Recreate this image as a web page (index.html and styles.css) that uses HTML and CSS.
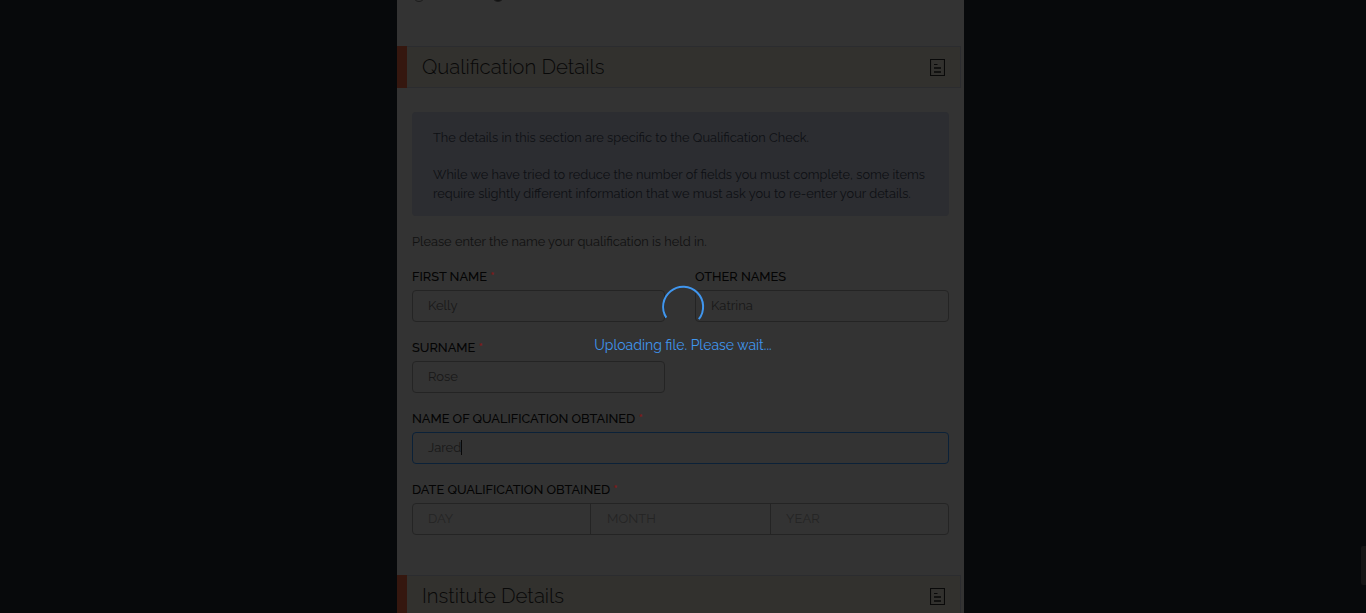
FILE: index.html
```html
<!DOCTYPE html>
<html lang="en">
<head>
<meta charset="utf-8">
<title>Qualification Details</title>
<link rel="stylesheet" href="styles.css">
</head>
<body>
<main class="sheet">
  <div class="options"><i class="radio"></i><i class="radio radio-on"></i></div>
  <header class="section-head">
    <h2>Qualification Details</h2>
    <svg class="doc" viewBox="0 0 15 17"><path d="M.5 .5H14.5V16.5H.5Z M4 5.5H7.5"/><path class="lines" d="M4 9H11 M4 13H11"/></svg>
  </header>
  <section class="body">
    <div class="notice">
      <p>The details in this section are specific to the Qualification Check.</p>
      <p>While we have tried to reduce the number of fields you must complete, some items<br>require slightly different information that we must ask you to re-enter your details.</p>
    </div>
    <p class="intro">Please enter the name your qualification is held in.</p>
    <div class="row">
      <div class="field"><label>FIRST NAME <b>*</b></label><div class="input">Kelly</div></div>
      <div class="field"><label>OTHER NAMES</label><div class="input">Katrina</div></div>
    </div>
    <div class="row">
      <div class="field"><label>SURNAME <b>*</b></label><div class="input">Rose</div></div>
    </div>
    <div class="field"><label>NAME OF QUALIFICATION OBTAINED <b>*</b></label><div class="input focus">Jared<i class="caret"></i></div></div>
    <div class="field"><label>DATE QUALIFICATION OBTAINED <b>*</b></label>
      <div class="input date"><span>DAY</span><span>MONTH</span><span>YEAR</span></div>
    </div>
  </section>
  <header class="section-head">
    <h2>Institute Details</h2>
    <svg class="doc" viewBox="0 0 15 17"><path d="M.5 .5H14.5V16.5H.5Z M4 5.5H7.5"/><path class="lines" d="M4 9H11 M4 13H11"/></svg>
  </header>
</main>
<div class="loading">
  <svg class="spinner" viewBox="0 0 44 44"><path d="M5.3 32.6A20 20 0 1 1 37.8 34.2"/></svg>
  <p>Uploading file. Please wait...</p>
</div>
<div class="scroll-thumb"></div>
</body>
</html>
```
FILE: styles.css
```css
* { box-sizing: border-box; }
body {
  margin: 0;
  height: 613px;
  overflow: hidden;
  position: relative;
  background: #07090b;
  font-family: Raleway, Lato, "Open Sans", sans-serif;
  font-size: 12.8px;
  color: #111;
}
p, h2 { margin: 0; }
.sheet { width: 567px; height: 613px; margin-left: 397px; background: #333; overflow: hidden; }
.options { height: 46px; display: flex; gap: 67px; padding-left: 16px; overflow: hidden; }
.radio { width: 12px; height: 12px; margin-top: -10px; border: 1px solid #1c1c1c; border-radius: 50%; }
.radio-on { background: #111; }
.section-head {
  display: flex; align-items: center;
  width: 564px; height: 42px; padding-right: 15px;
  background: #32312e; border: 1px solid #2b2c2f; border-left: 0;
}
.section-head::before { content: ""; width: 10px; height: 42px; margin: -1px 15px -1px 0; background: #35170f; flex: none; }
h2 { flex: 1; font-size: 20.4px; font-weight: 300; line-height: 40px; color: #080808; white-space: nowrap; }
.doc { width: 15px; height: 17px; margin-top: 1px; fill: none; stroke: #090909; stroke-width: 1.1; }
.lines { stroke-width: 1.7; }
.body { padding: 24px 15px 0; height: 487px; }
.notice { height: 104px; padding: 16px 21px; background: #2c2d31; border-radius: 4px; line-height: 19px; color: #0e1014; white-space: nowrap; }
.notice p + p { margin-top: 18px; }
.intro { height: 20px; line-height: 20px; margin: 16px 0 17px; white-space: nowrap; }
.row { display: grid; grid-template-columns: 253px 254px; column-gap: 30px; }
.field { height: 71px; }
label { display: block; height: 21px; line-height: 15px; color: #040404; font-weight: 500; letter-spacing: -0.02px; white-space: nowrap; }
label b { color: #7a1c1c; font-weight: 700; }
.input { height: 32px; padding: 0 15px; font-size: 13px; line-height: 29px; border: 1px solid #242424; border-radius: 4px; color: #181818; display: flex; }
.focus { border-color: #0b2138; }
.caret { width: 1px; height: 15px; margin-top: 7px; background: #080808; }
.date { display: grid; grid-template-columns: 177px 180px 1fr; padding: 0; color: #242424; }
.date span { padding-left: 15px; }
.date span + span { border-left: 1px solid #242424; }
.date span:nth-child(2) { padding-left: 16px; }
.loading { position: absolute; inset: 285px 0 auto 0; display: flex; flex-direction: column; align-items: center; color: #4096ee; font-size: 14px; }
.loading p { margin-top: 6px; line-height: 20px; white-space: nowrap; }
.spinner { width: 44px; height: 44px; fill: none; stroke: #4096ee; stroke-width: 2; }
.scroll-thumb { position: absolute; left: 1361px; top: 546px; width: 5px; height: 39px; background: #151515; border-radius: 2px 0 0 2px; }
```
